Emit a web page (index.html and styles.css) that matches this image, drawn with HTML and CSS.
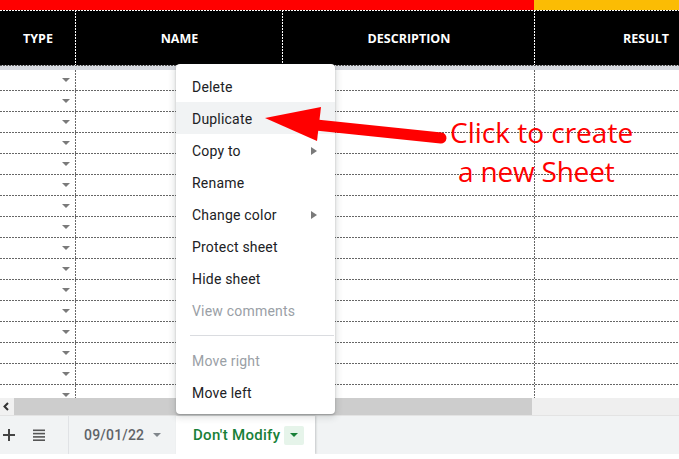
FILE: index.html
```html
<!DOCTYPE html>
<html>
<head>
<meta charset="utf-8">
<link rel="stylesheet" href="styles.css">
</head>
<body>
<div class="sheet">
  <div class="colorbar"><div class="cb-red"></div><div class="cb-yellow"></div></div>
  <div class="header">
    <div class="hcell c1">TYPE</div>
    <div class="hcell c2">NAME</div>
    <div class="hcell c3">DESCRIPTION</div>
    <div class="hcell c4">RESULT</div>
  </div>
  <div class="freeze"></div>
  <div class="grid">
    <div class="row"><div class="cell c1"><span class="dd"></span></div><div class="cell c2"></div><div class="cell c3"></div><div class="cell c4"></div></div>
    <div class="row"><div class="cell c1"><span class="dd"></span></div><div class="cell c2"></div><div class="cell c3"></div><div class="cell c4"></div></div>
    <div class="row"><div class="cell c1"><span class="dd"></span></div><div class="cell c2"></div><div class="cell c3"></div><div class="cell c4"></div></div>
    <div class="row"><div class="cell c1"><span class="dd"></span></div><div class="cell c2"></div><div class="cell c3"></div><div class="cell c4"></div></div>
    <div class="row"><div class="cell c1"><span class="dd"></span></div><div class="cell c2"></div><div class="cell c3"></div><div class="cell c4"></div></div>
    <div class="row"><div class="cell c1"><span class="dd"></span></div><div class="cell c2"></div><div class="cell c3"></div><div class="cell c4"></div></div>
    <div class="row"><div class="cell c1"><span class="dd"></span></div><div class="cell c2"></div><div class="cell c3"></div><div class="cell c4"></div></div>
    <div class="row"><div class="cell c1"><span class="dd"></span></div><div class="cell c2"></div><div class="cell c3"></div><div class="cell c4"></div></div>
    <div class="row"><div class="cell c1"><span class="dd"></span></div><div class="cell c2"></div><div class="cell c3"></div><div class="cell c4"></div></div>
    <div class="row"><div class="cell c1"><span class="dd"></span></div><div class="cell c2"></div><div class="cell c3"></div><div class="cell c4"></div></div>
    <div class="row"><div class="cell c1"><span class="dd"></span></div><div class="cell c2"></div><div class="cell c3"></div><div class="cell c4"></div></div>
    <div class="row"><div class="cell c1"><span class="dd"></span></div><div class="cell c2"></div><div class="cell c3"></div><div class="cell c4"></div></div>
    <div class="row"><div class="cell c1"><span class="dd"></span></div><div class="cell c2"></div><div class="cell c3"></div><div class="cell c4"></div></div>
    <div class="row"><div class="cell c1"><span class="dd"></span></div><div class="cell c2"></div><div class="cell c3"></div><div class="cell c4"></div></div>
    <div class="row"><div class="cell c1"><span class="dd"></span></div><div class="cell c2"></div><div class="cell c3"></div><div class="cell c4"></div></div>
    <div class="row"><div class="cell c1"><span class="dd"></span></div><div class="cell c2"></div><div class="cell c3"></div><div class="cell c4"></div></div>
  </div>
  <div class="hscroll">
    <div class="sarrow"><svg width="14" height="17" viewBox="0 0 14 17"><polyline points="8,5 4.5,8.5 8,12" fill="none" stroke="#333" stroke-width="2"/></svg></div>
    <div class="thumb"></div>
    <div class="track"></div>
  </div>
  <div class="tabbar">
    <div class="tb-btn plus"><svg width="12" height="12" viewBox="0 0 12 12"><rect x="0" y="5" width="12" height="2" fill="#444"/><rect x="5" y="0" width="2" height="12" fill="#444"/></svg></div>
    <div class="tb-btn list"><svg width="12" height="12" viewBox="0 0 12 12"><rect x="0" y="0.5" width="12" height="1.6" fill="#555"/><rect x="0" y="3.8" width="12" height="1.6" fill="#555"/><rect x="0" y="7.1" width="12" height="1.6" fill="#555"/><rect x="0" y="10.4" width="12" height="1.6" fill="#555"/></svg></div>
    <div class="tab">
      <span class="tab-name">09/01/22</span>
      <span class="tab-caret"></span>
    </div>
    <div class="tab active">
      <span class="tab-name">Don't Modify</span>
      <span class="tab-drop"><span class="tab-caret green"></span></span>
    </div>
  </div>
</div>

<div class="menu">
  <div class="mi">Delete</div>
  <div class="mi hover">Duplicate</div>
  <div class="mi">Copy to<span class="sub"></span></div>
  <div class="mi">Rename</div>
  <div class="mi">Change color<span class="sub"></span></div>
  <div class="mi">Protect sheet</div>
  <div class="mi">Hide sheet</div>
  <div class="mi disabled">View comments</div>
  <div class="msep"></div>
  <div class="mi disabled">Move right</div>
  <div class="mi">Move left</div>
</div>

<svg class="arrow" width="679" height="459" viewBox="0 0 679 459">
  <line x1="316" y1="125" x2="441" y2="138" stroke="#ff0000" stroke-width="11" stroke-linecap="round"/>
  <polygon points="265,118 321,107 317,141" fill="#ff0000"/>
</svg>

<div class="callout"><div class="cl-line">Click to create</div><div class="cl-line second">a new Sheet</div></div>
</body>
</html>
```

FILE: styles.css
```css
* { box-sizing: border-box; }
html, body { margin: 0; padding: 0; background: #fff; }
body { width: 679px; height: 459px; overflow: hidden; position: relative; font-family: Roboto, "Liberation Sans", sans-serif; }

.sheet { width: 679px; overflow: hidden; }

.colorbar { display: flex; height: 10px; }
.cb-red { width: 534px; background: #ff0000; }
.cb-yellow { flex: 1; background: #fbbc04; }

.header {
  display: flex;
  height: 55px;
  background:
    linear-gradient(to right, #fff 2px, transparent 2px) top left / 3px 1px repeat-x,
    #000;
}
.hcell {
  flex: none;
  display: flex;
  align-items: center;
  justify-content: center;
  color: #fff;
  font-family: "Open Sans", "Liberation Sans", sans-serif;
  font-weight: 700;
  font-size: 12.5px;
  padding-top: 2px;
  background: linear-gradient(#fff 2px, transparent 2px) top right / 1px 3px repeat-y;
}
.c1 { width: 76px; }
.c2 { width: 207px; }
.c3 { width: 252px; }
.c4 { width: 222px; }

.freeze {
  height: 5px;
  background:
    linear-gradient(to right, #555 2px, transparent 2px) top left / 3px 1px repeat-x,
    #d6d9df;
}

.grid { height: 328px; overflow: hidden; }
.row { display: flex; height: 21px; }
.cell {
  flex: none;
  position: relative;
  display: flex;
  align-items: center;
  justify-content: flex-end;
  background:
    linear-gradient(to right, #666 2px, transparent 2px) bottom left / 3px 1px repeat-x,
    linear-gradient(#666 2px, transparent 2px) top right / 1px 3px repeat-y;
}
.c1.cell { padding-right: 6px; padding-bottom: 1px; }
.dd {
  width: 0; height: 0;
  border-left: 4px solid transparent;
  border-right: 4px solid transparent;
  border-top: 4px solid #7a7a7a;
}

.hscroll { display: flex; height: 17px; }
.sarrow { width: 14px; background: #f1f1f1; display: flex; }
.thumb { width: 518px; background: #cdcdcd; }
.track { flex: 1; background: #efefef; }

.tabbar {
  display: flex;
  align-items: stretch;
  height: 39px;
  background: #f1f3f4;
  border-top: 1px solid #e3e3e3;
}
.tb-btn { display: flex; align-items: center; justify-content: center; }
.plus { width: 17px; padding-left: 1px; }
.list { width: 52px; justify-content: flex-start; padding-left: 16px; border-right: 1px solid #e0e2e5; }
.tab {
  display: flex;
  align-items: center;
  width: 107px;
  padding-left: 15px;
  font-size: 14px;
  font-weight: 500;
  color: #5f6368;
}
.tab-name { letter-spacing: 0.2px; }
.tab-caret {
  width: 0; height: 0;
  margin-left: 9px;
  border-left: 4px solid transparent;
  border-right: 4px solid transparent;
  border-top: 4px solid #80868b;
}
.tab.active {
  width: 139px;
  padding-left: 17px;
  background: #fff;
  color: #188038;
  font-size: 15px;
  font-weight: 500;
  box-shadow: 1px 0 2px rgba(60,64,67,0.25);
}
.tab.active .tab-name { letter-spacing: 0.3px; }
.tab-drop {
  width: 20px; height: 19px;
  margin-left: 4px;
  background: #e6f4ea;
  border-radius: 2px;
  display: flex; align-items: center; justify-content: center;
}
.tab-caret.green { margin-left: 0; border-top-color: #188038; }

.menu {
  position: absolute;
  left: 176px; top: 64px;
  width: 159px;
  padding: 6px 0;
  background: #fff;
  border-radius: 4px;
  box-shadow: 0 2px 6px 2px rgba(60,64,67,0.15), 0 1px 2px rgba(60,64,67,0.3);
  font-family: Roboto, "Liberation Sans", sans-serif;
  font-size: 14px;
  letter-spacing: 0.2px;
  color: #202124;
}
.mi {
  display: flex;
  align-items: center;
  height: 32px;
  padding: 1px 18px 0 16px;
}
.mi.hover { background: #f1f3f4; }
.mi.disabled { color: #9aa0a6; }
.sub {
  margin-left: auto;
  width: 0; height: 0;
  border-top: 4px solid transparent;
  border-bottom: 4px solid transparent;
  border-left: 6px solid #7a7a7a;
}
.msep { height: 1px; background: #dadce0; margin: 9px 1px 8px 14px; }

.arrow { position: absolute; left: 0; top: 0; pointer-events: none; }

.callout {
  position: absolute;
  left: 450px; top: 113px;
  font-family: "Open Sans", "Liberation Sans", sans-serif;
  font-size: 28px;
  line-height: 39px;
  color: #ff0000;
  white-space: nowrap;
}
.cl-line.second { padding-left: 8px; letter-spacing: -0.2px; }
```
